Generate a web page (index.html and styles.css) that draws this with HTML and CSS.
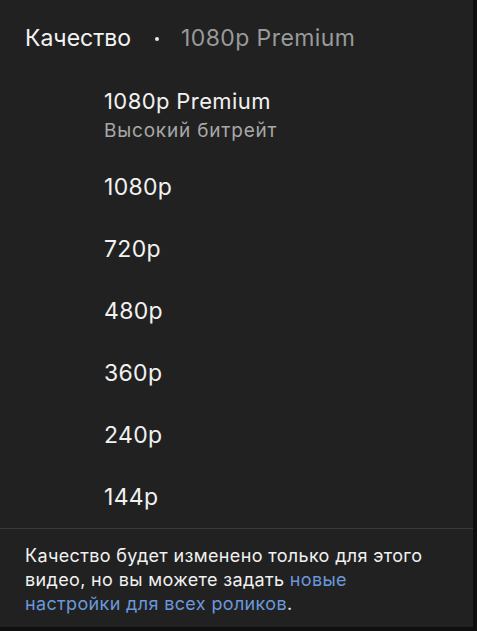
FILE: index.html
```html
<!DOCTYPE html>
<html lang="ru">
<head>
<meta charset="utf-8">
<link rel="stylesheet" href="styles.css">
</head>
<body>
<div class="panel">
  <div class="header">
    <span class="title">Качество</span>
    <span class="dot"></span>
    <span class="current">1080p Premium</span>
  </div>
  <div class="list">
    <div class="premium">
      <div class="label">1080p Premium</div>
      <div class="sub">Высокий битрейт</div>
    </div>
    <div class="row"><span class="label">1080p</span></div>
    <div class="row"><span class="label">720p</span></div>
    <div class="row"><span class="label">480p</span></div>
    <div class="row"><span class="label">360p</span></div>
    <div class="row"><span class="label">240p</span></div>
    <div class="row"><span class="label">144p</span></div>
  </div>
  <div class="footer">Качество будет изменено только для этого видео, но вы можете задать <a class="link" href="#">новые настройки для всех роликов</a>.</div>
</div>
</body>
</html>
```
FILE: styles.css
```css
html, body {
  margin: 0;
  padding: 0;
  background: #0f0f0f;
}
body {
  width: 477px;
  height: 631px;
  overflow: hidden;
  font-family: Inter, "Noto Sans", sans-serif;
  color: #f1f1f1;
}
.panel {
  width: 473px;
  height: 627px;
  background: #212121;
  display: flex;
  flex-direction: column;
}
.header {
  height: 76px;
  display: flex;
  align-items: center;
  padding-left: 25px;
  font-size: 23px;
}
.title {
  color: #f3f3f3;
}
.dot {
  width: 4px;
  height: 4px;
  border-radius: 50%;
  background: #e8e8e8;
  margin: 2px 22px 0 24px;
}
.current {
  color: #9a9a9a;
  letter-spacing: 0.4px;
}
.list {
  display: flex;
  flex-direction: column;
  padding-left: 104px;
}
.premium {
  height: 80px;
  padding-top: 11px;
  box-sizing: border-box;
}
.premium .label {
  font-size: 22px;
  letter-spacing: 0.4px;
  line-height: 29px;
}
.sub {
  font-size: 19px;
  letter-spacing: 0.8px;
  line-height: 30px;
  color: #a8a8a8;
}
.row {
  height: 62px;
  display: flex;
  align-items: center;
  font-size: 23px;
  letter-spacing: 0.3px;
}
.footer {
  border-top: 1px solid #3a3a3a;
  padding: 15px 40px 0 25px;
  font-size: 18px;
  letter-spacing: 0.35px;
  line-height: 24px;
  color: #f1f1f1;
}
.link {
  color: #6a98dc;
  text-decoration: none;
}
```
